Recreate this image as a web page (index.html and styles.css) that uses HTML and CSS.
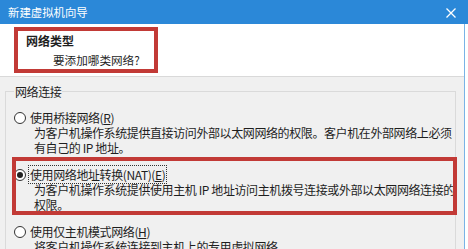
FILE: index.html
```html
<!DOCTYPE html>
<html lang="zh-CN">
<head>
    <meta charset="UTF-8">
    <title>新建虚拟机向导</title>
    <link rel="stylesheet" href="styles.css">
</head>
<body>
    <div class="titlebar">
        <span class="title">新建虚拟机向导</span>
        <svg class="close" width="10" height="10" viewBox="0 0 10 10">
            <path d="M0.5 0.5 L9.5 9.5 M9.5 0.5 L0.5 9.5" stroke="#fff" stroke-width="1.3" fill="none"/>
        </svg>
    </div>
    <div class="window">
        <div class="header">
            <div class="mark">
                <div class="heading">网络类型</div>
                <div class="subheading">要添加哪类网络?</div>
            </div>
        </div>
        <div class="content">
            <fieldset class="group">
                <legend>网络连接</legend>
                <div class="option">
                    <label class="choice"><span class="radio"></span><span class="text">使用桥接网络(<u>R</u>)</span></label>
                    <div class="desc">为客户机操作系统提供直接访问外部以太网网络的权限。客户机在外部网络上必须<br>有自己的 IP 地址。</div>
                </div>
                <div class="option marked">
                    <label class="choice"><span class="radio checked"></span><span class="text focus">使用网络地址转换(NAT)(<u>E</u>)</span></label>
                    <div class="desc">为客户机操作系统提供使用主机 IP 地址访问主机拨号连接或外部以太网网络连接的<br>权限。</div>
                </div>
                <div class="option">
                    <label class="choice"><span class="radio"></span><span class="text">使用仅主机模式网络(<u>H</u>)</span></label>
                    <div class="desc">将客户机操作系统连接到主机上的专用虚拟网络。</div>
                </div>
            </fieldset>
        </div>
    </div>
</body>
</html>
```

FILE: styles.css
```css
body {
    margin: 0;
    background-color: #fff;
    font-family: "Noto Sans CJK SC", sans-serif;
    color: #1e1e1e;
    overflow: hidden;
    height: 249px;
}
.titlebar {
    height: 24px;
    background-color: #2b88d8;
    display: flex;
    align-items: center;
    justify-content: space-between;
    padding: 0 12px 0 8px;
}
.title {
    color: #fff;
    font-size: 11.4px;
    line-height: 24px;
}
.close {
    display: block;
    margin-top: 1px;
}
.window {
    width: 464px;
    border-right: 1px solid #79b3e6;
    height: 225px;
    overflow: hidden;
    background-color: #f0f0f0;
}
.header {
    height: 53px;
    background-color: #fff;
    border-bottom: 1px solid #d9d9d9;
    padding: 3px 0 0 14px;
    box-sizing: border-box;
}
.mark {
    width: 144px;
    height: 46px;
    box-sizing: border-box;
    border: 4px solid #c23a36;
    padding: 1px 0 0 8px;
}
.heading {
    font-size: 12px;
    font-weight: bold;
    line-height: 17px;
}
.subheading {
    font-size: 11.6px;
    line-height: 17px;
    margin: 3px 0 0 27px;
}
.content {
    padding: 7px 9px 0 5px;
}
.group {
    margin: 0;
    border: 1px solid #dadada;
    padding: 11px 0 0 8px;
    font-size: 12px;
    letter-spacing: -0.4px;
    line-height: 15px;
}
.group legend {
    padding: 0 1px;
}
.option {
    position: relative;
    margin-bottom: 12px;
}
.choice {
    display: flex;
    align-items: center;
    height: 15px;
}
.radio {
    width: 12px;
    height: 12px;
    box-sizing: border-box;
    border: 1px solid #333;
    border-radius: 50%;
    background-color: #fff;
    margin-right: 3px;
    display: flex;
    align-items: center;
    justify-content: center;
}
.radio.checked::before {
    content: "";
    width: 6px;
    height: 6px;
    border-radius: 50%;
    background-color: #222;
}
.text {
    padding: 1px 1px;
}
.text.focus {
    outline: 1px dotted #333;
}
.desc {
    padding-left: 20px;
    white-space: nowrap;
}
/* annotation frame drawn over the selected option */
.marked::after {
    content: "";
    position: absolute;
    left: -2px;
    right: -2px;
    top: -10px;
    bottom: -3px;
    border: 4px solid #c23a36;
}
```
